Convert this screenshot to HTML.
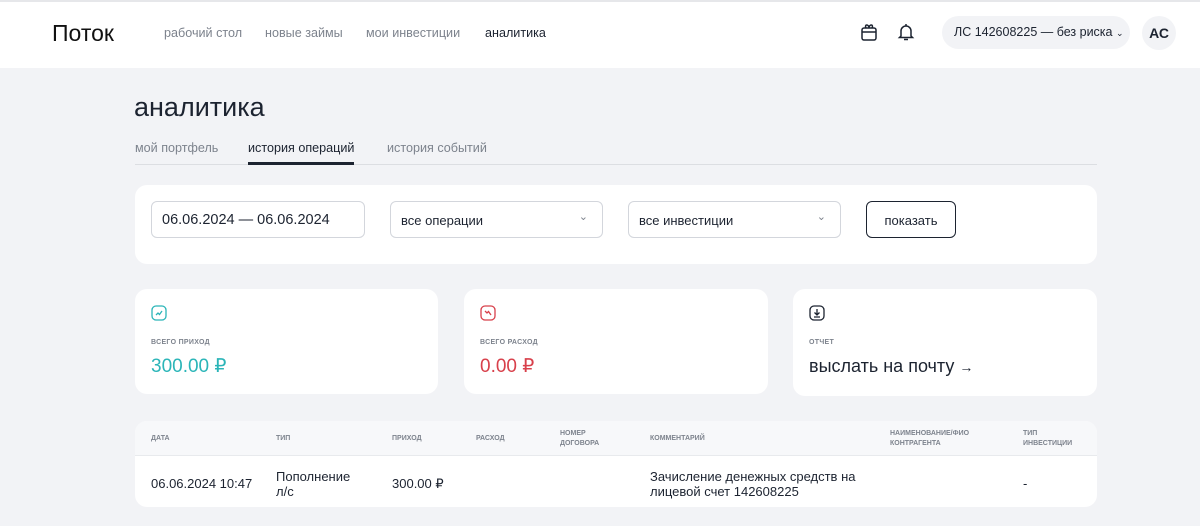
<!DOCTYPE html><html><head><meta charset="utf-8"><style>
*{margin:0;padding:0;box-sizing:border-box}
body{width:1200px;height:526px;overflow:hidden;background:#f2f3f6;font-family:"Liberation Sans","Noto Sans CJK SC",sans-serif;color:#1c2330;position:relative}
.a{position:absolute;white-space:nowrap}
.hdr{position:absolute;left:0;top:0;width:1200px;height:68px;background:#fff;border-top:2px solid #e6e7ea}
.card{position:absolute;background:#fff;border-radius:12px}
.sel{position:absolute;border:1px solid #d3d6dc;border-radius:6px;height:37px;background:#fff;font-size:13px;padding:11px 10px}
.lbl{font-size:7px;font-weight:bold;color:#7d838d;letter-spacing:.3px}
.th{font-size:7px;font-weight:bold;color:#7d838d;line-height:10px}
.td{font-size:13px;color:#1c2330;line-height:15px}
</style></head><body>
<div class="hdr"></div>
<div class="a" style="left:52px;top:20px;font-size:23px;color:#111">Поток</div>
<div class="a" style="left:164px;top:26px;font-size:12.6px;color:#7d838d">рабочий стол</div>
<div class="a" style="left:265px;top:26px;font-size:12.6px;color:#7d838d">новые займы</div>
<div class="a" style="left:366px;top:26px;font-size:12.6px;color:#7d838d">мои инвестиции</div>
<div class="a" style="left:485px;top:26px;font-size:12.6px;color:#1c2330">аналитика</div>
<svg class="a" style="left:859px;top:22px" width="20" height="20" viewBox="0 0 20 20" fill="none" stroke="#1c2330" stroke-width="1.5"><rect x="3" y="6" width="14" height="12" rx="2"/><path d="M3 10h14M7 6c-2-4 3-4 3 0c0-4 5-4 3 0"/></svg>
<svg class="a" style="left:896px;top:22px" width="20" height="20" viewBox="0 0 20 20" fill="none" stroke="#1c2330" stroke-width="1.5"><path d="M5 14V9a5 5 0 0 1 10 0v5l1.5 1.5h-13zM8 17.5h4M10 2v2"/></svg>
<div class="a" style="left:942px;top:16px;width:188px;height:33px;border-radius:17px;background:#f2f3f6;font-size:12.5px;padding:9px 0 0 12px">ЛС 142608225 — без риска <span style="font-size:9px">⌄</span></div>
<div class="a" style="left:1142px;top:16px;width:34px;height:34px;border-radius:50%;background:#f2f3f6;font-size:14px;font-weight:bold;text-align:center;line-height:34px">АС</div>
<div class="a" style="left:134px;top:92px;font-size:27px;color:#1c2330">аналитика</div>
<div class="a" style="left:135px;top:141px;font-size:12.6px;color:#7d838d">мой портфель</div>
<div class="a" style="left:248px;top:141px;font-size:12.6px;color:#1c2330">история операций</div>
<div class="a" style="left:387px;top:141px;font-size:12.6px;color:#7d838d">история событий</div>
<div class="a" style="left:135px;top:164px;width:962px;height:1px;background:#dcdee2"></div>
<div class="a" style="left:248px;top:162px;width:106px;height:3px;background:#1c2330"></div>
<div class="card" style="left:135px;top:185px;width:962px;height:79px"></div>
<div class="sel" style="left:151px;top:201px;width:214px;font-size:14.5px;padding-top:10px">06.06.2024 — 06.06.2024</div>
<div class="sel" style="left:390px;top:201px;width:213px">все операции<span style="position:absolute;right:14px;top:8px;font-size:11px;color:#7d838d">⌄</span></div>
<div class="sel" style="left:628px;top:201px;width:213px">все инвестиции<span style="position:absolute;right:14px;top:8px;font-size:11px;color:#7d838d">⌄</span></div>
<div class="sel" style="left:866px;top:201px;width:90px;border-color:#1c2330;text-align:center;padding:11px 0">показать</div>
<div class="card" style="left:135px;top:289px;width:303px;height:105px"></div>
<div class="card" style="left:464px;top:289px;width:304px;height:105px"></div>
<div class="card" style="left:793px;top:289px;width:304px;height:107px"></div>
<svg class="a" style="left:151px;top:305px" width="16" height="16" viewBox="0 0 16 16" fill="none" stroke="#2bb5b8" stroke-width="1.3"><rect x="1" y="1" width="14" height="14" rx="4"/><path d="M5 10l2-2 1.5 1.5L11 6"/></svg>
<svg class="a" style="left:480px;top:305px" width="16" height="16" viewBox="0 0 16 16" fill="none" stroke="#d8404b" stroke-width="1.3"><rect x="1" y="1" width="14" height="14" rx="4"/><path d="M5 6l2 2 1.5-1.5L11 10"/></svg>
<svg class="a" style="left:809px;top:305px" width="16" height="16" viewBox="0 0 16 16" fill="none" stroke="#1c2330" stroke-width="1.3"><rect x="1" y="1" width="14" height="14" rx="4"/><path d="M8 4v6M5.5 7.5L8 10l2.5-2.5M5 12h6"/></svg>
<div class="a lbl" style="left:151px;top:339px">ВСЕГО ПРИХОД</div>
<div class="a lbl" style="left:480px;top:339px">ВСЕГО РАСХОД</div>
<div class="a lbl" style="left:809px;top:339px">ОТЧЕТ</div>
<div class="a" style="left:151px;top:355px;font-size:19px;color:#2bb5b8">300.00 ₽</div>
<div class="a" style="left:480px;top:355px;font-size:19px;color:#d8404b">0.00 ₽</div>
<div class="a" style="left:809px;top:356px;font-size:18px;color:#1c2330">выслать на почту <span style="font-size:14px">→</span></div>
<div class="card" style="left:135px;top:421px;width:962px;height:86px;overflow:hidden"><div style="height:35px;background:#f7f8fa;border-bottom:1px solid #e8eaed"></div></div>
<div class="a th" style="left:151px;top:434px">ДАТА</div>
<div class="a th" style="left:276px;top:434px">ТИП</div>
<div class="a th" style="left:392px;top:434px">ПРИХОД</div>
<div class="a th" style="left:476px;top:434px">РАСХОД</div>
<div class="a th" style="left:560px;top:429px">НОМЕР<br>ДОГОВОРА</div>
<div class="a th" style="left:650px;top:434px">КОММЕНТАРИЙ</div>
<div class="a th" style="left:890px;top:429px">НАИМЕНОВАНИЕ/ФИО<br>КОНТРАГЕНТА</div>
<div class="a th" style="left:1023px;top:429px">ТИП<br>ИНВЕСТИЦИИ</div>
<div class="a td" style="left:151px;top:476px">06.06.2024 10:47</div>
<div class="a td" style="left:276px;top:469px">Пополнение<br>л/с</div>
<div class="a td" style="left:392px;top:476px">300.00 ₽</div>
<div class="a td" style="left:650px;top:469px">Зачисление денежных средств на<br>лицевой счет 142608225</div>
<div class="a td" style="left:1023px;top:476px">-</div>
</body></html>
